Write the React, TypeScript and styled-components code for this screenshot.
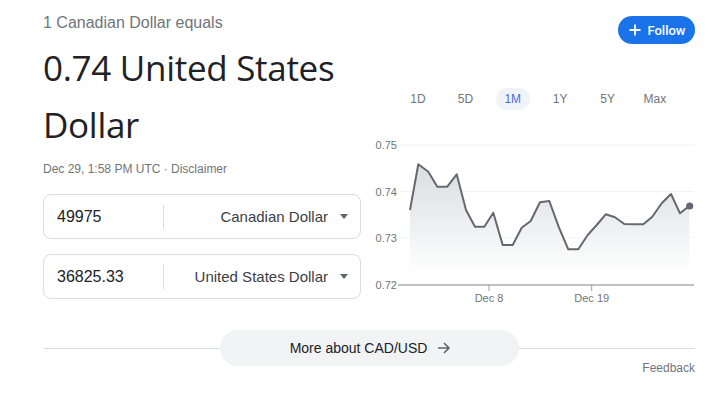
import React from "react";
import styled, { createGlobalStyle } from "styled-components";

const GlobalStyle = createGlobalStyle`
  body {
    margin: 0;
    background: #fff;
    font-family: Arial, "Liberation Sans", sans-serif;
  }
`;

const Page = styled.div`
  width: 723px;
  height: 407px;
  box-sizing: border-box;
  padding: 12px 28px 0 43px;
`;

const Main = styled.div`
  display: grid;
  grid-template-columns: 318px 1fr;
  column-gap: 9px;
`;

const LeftCol = styled.div`
  display: flex;
  flex-direction: column;
`;

const Caption = styled.div`
  font-size: 16px;
  line-height: 22px;
  color: #70757a;
`;

const Headline = styled.div`
  margin-top: 5px;
  font-family: "Open Sans", Roboto, sans-serif;
  font-size: 35px;
  line-height: 57px;
  color: #202124;
  letter-spacing: -0.3px;
`;

const Stamp = styled.div`
  margin-top: 8px;
  font-size: 12px;
  line-height: 16px;
  color: #70757a;
`;

const Converter = styled.div`
  margin-top: 17px;
  display: flex;
  flex-direction: column;
  gap: 15px;
`;

const Field = styled.div`
  height: 45px;
  box-sizing: border-box;
  border: 1px solid #dadce0;
  border-radius: 8px;
  display: flex;
  align-items: center;
`;

const Amount = styled.div`
  width: 119px;
  padding-left: 13px;
  box-sizing: border-box;
  font-size: 16px;
  color: #202124;
`;

const Divider = styled.div`
  width: 1px;
  height: 24px;
  background: #dadce0;
`;

const Currency = styled.div`
  flex: 1;
  display: flex;
  align-items: center;
  justify-content: flex-end;
  gap: 12px;
  padding-right: 12px;
  font-size: 15px;
  color: #3c4043;
`;

const Caret = styled.span`
  width: 0;
  height: 0;
  border-left: 4.5px solid transparent;
  border-right: 4.5px solid transparent;
  border-top: 5px solid #5f6368;
`;

const RightCol = styled.div`
  display: flex;
  flex-direction: column;
  padding-top: 4px;
`;

const FollowRow = styled.div`
  display: flex;
  justify-content: flex-end;
`;

const FollowButton = styled.button`
  height: 28px;
  width: 77px;
  border: none;
  border-radius: 14px;
  background: #1a73e8;
  color: #fff;
  display: flex;
  align-items: center;
  justify-content: center;
  gap: 6px;
  padding: 0 0 0 2px;
  font-family: Roboto, Arial, sans-serif;
  font-weight: 500;
  font-size: 13px;
`;

const Tabs = styled.div`
  margin-top: 44px;
  margin-left: 31px;
  display: flex;
  gap: 13.4px;
`;

const Tab = styled.div<{ $active?: boolean }>`
  width: 34px;
  height: 22px;
  border-radius: 11px;
  display: flex;
  align-items: center;
  justify-content: center;
  font-size: 12px;
  color: ${(p) => (p.$active ? "#4e6fd4" : "#70757a")};
  background: ${(p) => (p.$active ? "#f0f3fa" : "transparent")};
`;

const ChartWrap = styled.div`
  margin-top: 25px;
  height: 170px;
`;

const Footer = styled.div`
  margin-top: 25px;
  display: flex;
  flex-direction: column;
`;

const MoreRow = styled.div`
  position: relative;
  height: 36px;
  display: flex;
  align-items: center;
  justify-content: center;

  &::before {
    content: "";
    position: absolute;
    left: 0;
    right: 0;
    top: 18px;
    height: 1px;
    background: #dadce0;
  }
`;

const MoreButton = styled.div`
  position: relative;
  width: 299px;
  height: 36px;
  border-radius: 18px;
  background: #f1f3f4;
  display: flex;
  align-items: center;
  justify-content: center;
  gap: 10px;
  padding-left: 3px;
  box-sizing: border-box;
  font-size: 14px;
  color: #202124;
`;

const Feedback = styled.div`
  margin-top: -6px;
  align-self: flex-end;
  font-size: 12px;
  line-height: 16px;
  color: #70757a;
`;

const points: [number, number][] = [
  [410, 210], [418.3, 164.3], [428.3, 171.7], [437.3, 186.7], [447.3, 186.7],
  [456.7, 174.3], [466, 210], [475, 226.7], [484.3, 226.7], [493.3, 212.7],
  [502.7, 245], [512.7, 245], [521.7, 227.7], [530.7, 221], [540, 202.3],
  [549.3, 201], [559, 227.7], [568.3, 249.3], [578.3, 249.3], [587.7, 235],
  [596.7, 225], [605.7, 214.3], [615, 217.3], [624.3, 224], [633.3, 224.3],
  [643.3, 224.3], [652.3, 216.7], [661.7, 203.3], [671, 194], [680, 213.3],
  [689.3, 206],
];

function RateChart() {
  const line = points.map((p) => p.join(",")).join(" ");
  const area = `410,272 ${line} 689.3,272`;
  const grid = [
    { y: 145, label: "0.75" },
    { y: 191.5, label: "0.74" },
    { y: 238, label: "0.73" },
  ];
  return (
    <svg width="325" height="170" viewBox="370 135 325 170">
      <defs>
        <linearGradient id="fade" x1="0" y1="150" x2="0" y2="275" gradientUnits="userSpaceOnUse">
          <stop offset="0" stopColor="#d6d8dc" />
          <stop offset="1" stopColor="#ffffff" />
        </linearGradient>
      </defs>
      {grid.map((g) => (
        <g key={g.label}>
          <line x1="400" x2="694" y1={g.y} y2={g.y} stroke="#f1f3f4" strokeWidth="1" />
          <text x="397" y={g.y + 4} textAnchor="end" fontSize="11" fill="#70757a" fontFamily="Arial">
            {g.label}
          </text>
        </g>
      ))}
      <polygon points={area} fill="url(#fade)" />
      <polyline points={line} fill="none" stroke="#646870" strokeWidth="2" strokeLinejoin="round" />
      <circle cx="689.7" cy="206" r="3.6" fill="#646870" />
      <line x1="398" x2="694" y1="285" y2="285" stroke="#bdc1c6" strokeWidth="2" />
      <text x="397" y="289" textAnchor="end" fontSize="11" fill="#70757a" fontFamily="Arial">
        0.72
      </text>
      <line x1="489" x2="489" y1="285" y2="291" stroke="#9aa0a6" strokeWidth="1" />
      <line x1="591.7" x2="591.7" y1="285" y2="291" stroke="#9aa0a6" strokeWidth="1" />
      <text x="489" y="302" textAnchor="middle" fontSize="11" fill="#70757a" fontFamily="Arial">
        Dec 8
      </text>
      <text x="591.7" y="302" textAnchor="middle" fontSize="11" fill="#70757a" fontFamily="Arial">
        Dec 19
      </text>
    </svg>
  );
}

const ranges = ["1D", "5D", "1M", "1Y", "5Y", "Max"];

export default function App() {
  return (
    <>
      <GlobalStyle />
      <Page>
        <Main>
          <LeftCol>
            <Caption>1 Canadian Dollar equals</Caption>
            <Headline>
              0.74 United States
              <br />
              Dollar
            </Headline>
            <Stamp>Dec 29, 1:58 PM UTC · Disclaimer</Stamp>
            <Converter>
              <Field>
                <Amount>49975</Amount>
                <Divider />
                <Currency>
                  Canadian Dollar
                  <Caret />
                </Currency>
              </Field>
              <Field>
                <Amount>36825.33</Amount>
                <Divider />
                <Currency>
                  United States Dollar
                  <Caret />
                </Currency>
              </Field>
            </Converter>
          </LeftCol>
          <RightCol>
            <FollowRow>
              <FollowButton>
                <svg width="12" height="12" viewBox="0 0 12 12">
                  <path d="M6 0.5v11M0.5 6h11" stroke="#fff" strokeWidth="1.8" />
                </svg>
                Follow
              </FollowButton>
            </FollowRow>
            <Tabs>
              {ranges.map((r) => (
                <Tab key={r} $active={r === "1M"}>
                  {r}
                </Tab>
              ))}
            </Tabs>
            <ChartWrap>
              <RateChart />
            </ChartWrap>
          </RightCol>
        </Main>
        <Footer>
          <MoreRow>
            <MoreButton>
              More about CAD/USD
              <svg width="14" height="14" viewBox="0 0 14 14">
                <path d="M1 7h11M7 2l5 5-5 5" fill="none" stroke="#5f6368" strokeWidth="1.6" />
              </svg>
            </MoreButton>
          </MoreRow>
          <Feedback>Feedback</Feedback>
        </Footer>
      </Page>
    </>
  );
}
